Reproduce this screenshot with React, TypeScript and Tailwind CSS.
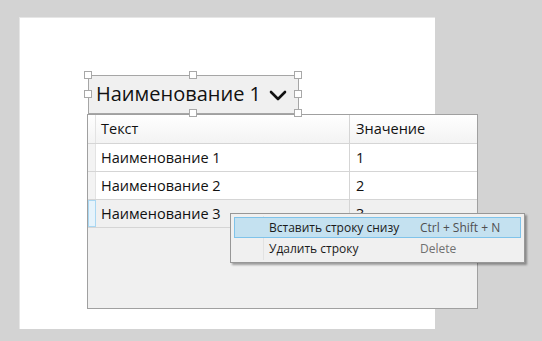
const font = { fontFamily: '"Open Sans", "Noto Sans", "DejaVu Sans", sans-serif' };

function Handle({ x, y }: { x: number; y: number }) {
  // selection grip, centred on the outline
  return (
    <div
      className="absolute w-[8px] h-[8px] bg-white border border-[#a8a8a8]"
      style={{ left: x - 4, top: y - 4 }}
    />
  );
}

const rows = [
  { name: "Наименование 1", value: "1" },
  { name: "Наименование 2", value: "2" },
  { name: "Наименование 3", value: "3" },
];

export default function App() {
  return (
    <div className="relative w-[542px] h-[341px] overflow-hidden bg-[#d3d3d3] pt-[17px] pl-[19px]" style={font}>
      <div className="w-[416px] h-[312px] bg-white border-l border-t border-[#e6e6e6] pt-[57px] pl-[68px]">
        {/* combobox in designer selection */}
        <div className="w-[211px] h-[39px] bg-[#f0f0f0] border border-[#a6a6a6] flex items-center pl-[7px] pr-[11px] justify-between">
          <span className="text-[20px] leading-none text-[#111] pb-[1px]">Наименование 1</span>
          <svg width="18" height="11" viewBox="0 0 18 11" className="mt-[1px]">
            <path d="M2 2 L9 9 L16 2" fill="none" stroke="#111" strokeWidth="2.6" strokeLinecap="round" strokeLinejoin="round" />
          </svg>
        </div>

        {/* data grid */}
        <div className="relative -ml-[1px] w-[391px] h-[195px] bg-[#f0f0f0] border border-[#a0a0a0] text-[14.5px] text-[#111]">
          <div className="flex h-[29px] bg-gradient-to-b from-white to-[#f3f3f3] border-b border-[#d5d5d5]">
            <div className="w-[8px] border-r border-[#e3e3e3]" />
            <div className="w-[254px] border-r border-[#d5d5d5] pl-[5px] flex items-center">Текст</div>
            <div className="flex-1 pl-[6px] flex items-center">Значение</div>
          </div>
          {rows.map((r, i) => (
            <div key={i} className={`flex h-[28px] border-b border-[#d5d5d5] ${i === 2 ? "bg-[#f0f0f0]" : "bg-white"}`}>
              <div className={`w-[8px] ${i === 2 ? "bg-[#e6f3fb] border border-[#a9d7f2]" : "bg-[#f3f3f3] border-r border-[#e3e3e3]"}`} />
              <div className="w-[254px] border-r border-[#d5d5d5] pl-[5px] flex items-center">{r.name}</div>
              <div className="flex-1 pl-[6px] flex items-center">{r.value}</div>
            </div>
          ))}
        </div>
      </div>

      <Handle x={88} y={75} />
      <Handle x={193} y={75} />
      <Handle x={298} y={75} />
      <Handle x={88} y={94} />
      <Handle x={298} y={94} />
      <Handle x={193} y={113} />
      <Handle x={298} y={113} />

      {/* context menu */}
      <div className="absolute left-[230px] top-[213px] w-[295px] h-[50px] bg-[#f0f0f0] border border-[#979797] shadow-[2px_2px_2px_rgba(0,0,0,0.35)] p-[3px] text-[12px] text-[#1a1a1a]">
        <div className="absolute left-[32px] top-[2px] bottom-[2px] w-px bg-[#e2e2e2]" />
        <div className="relative flex items-center h-[21px] bg-[#c4e1f0] border border-[#7fc3ea] pl-[34px]">
          <span className="w-[151px]">Вставить строку снизу</span>
          <span className="text-[#505050]">Ctrl + Shift + N</span>
        </div>
        <div className="relative flex items-center h-[21px] pl-[35px]">
          <span className="w-[151px]">Удалить строку</span>
          <span className="text-[#707070]">Delete</span>
        </div>
      </div>
    </div>
  );
}
